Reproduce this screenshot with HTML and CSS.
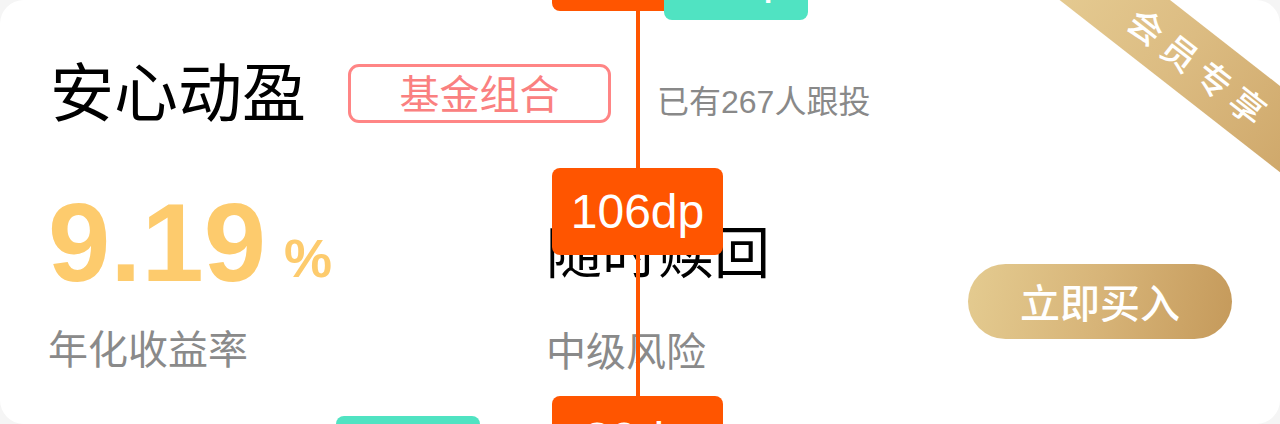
FILE: index.html
```html
<!DOCTYPE html>
<html lang="zh-CN">
<head>
<meta charset="utf-8">
<title>安心动盈</title>
<link rel="stylesheet" href="styles.css">
</head>
<body>
<div class="card">
  <div class="head">
    <h1 class="title">安心动盈</h1>
    <span class="tag">基金组合</span>
    <span class="followers">已有267人跟投</span>
  </div>
  <div class="body">
    <div class="metric metric-rate">
      <div class="rate"><span class="rate-num">9.19</span><span class="rate-unit">%</span></div>
      <div class="label label-rate">年化收益率</div>
    </div>
    <div class="metric metric-redeem">
      <div class="redeem">随时赎回</div>
      <div class="label label-redeem">中级风险</div>
    </div>
    <button class="buy">立即买入</button>
  </div>
  <div class="ribbon"><span class="ribbon-text">会员专享</span></div>
  <div class="measure">
    <div class="measure-line"></div>
    <div class="dim dim-orange dim-top">40dp</div>
    <div class="dim dim-teal dim-teal-top">32dp</div>
    <div class="dim dim-orange dim-mid">106dp</div>
    <div class="dim dim-orange dim-bottom">30dp</div>
    <div class="dim dim-teal dim-teal-bottom">32dp</div>
  </div>
</div>
</body>
</html>
```
FILE: styles.css
```css
* { box-sizing: border-box; }
html, body { margin: 0; padding: 0; }
body {
  background: #f5f5f5;
  width: 1280px;
  height: 424px;
  overflow: hidden;
  font-family: "Liberation Sans", "Noto Sans CJK SC", sans-serif;
}
.card {
  position: relative;
  width: 1280px;
  height: 424px;
  background: #fff;
  border-radius: 24px;
  overflow: hidden;
  padding: 56px 48px 0 48px;
}
.head {
  display: flex;
  align-items: flex-start;
  height: 67px;
}
.title {
  margin: 0 0 0 2px;
  font-family: "Noto Sans CJK SC", sans-serif;
  font-weight: 400;
  font-size: 64px;
  line-height: 64px;
  color: #000;
}
.tag {
  margin: 8px 0 0 42px;
  width: 263px;
  height: 59px;
  border: 3px solid #ff8585;
  border-radius: 11px;
  font-family: "Noto Sans CJK SC", sans-serif;
  font-size: 40px;
  line-height: 50px;
  padding-bottom: 3px;
  text-align: center;
  color: #fa8080;
}
.followers {
  margin: 30px 0 0 46px;
  font-size: 32px;
  line-height: 32px;
  color: #898989;
}
.body {
  display: flex;
  align-items: flex-start;
  margin-top: 61px;
}
.metric { display: flex; flex-direction: column; }
.metric-rate { width: 498px; }
.rate {
  margin: 3px 0 0 0;
  color: #fdcb6d;
  font-family: "Liberation Sans", sans-serif;
  font-weight: 700;
  line-height: 112px;
  height: 112px;
  white-space: nowrap;
}
.rate-num { font-size: 112px; }
.rate-unit { font-size: 54px; margin-left: 18px; vertical-align: 4px; }
.label {
  font-family: "Noto Sans CJK SC", sans-serif;
  font-size: 40px;
  line-height: 40px;
  color: #8a8a8a;
}
.label-rate { margin-top: 28px; }
.metric-redeem { margin-top: 37px; }
.redeem {
  font-family: "Noto Sans CJK SC", sans-serif;
  font-size: 56px;
  line-height: 56px;
  color: #000;
}
.label-redeem { margin-top: 52px; }
.buy {
  margin: 80px 0 0 auto;
  width: 264px;
  height: 75px;
  border: 0;
  border-radius: 38px;
  background: linear-gradient(100deg, #e4cb90 0%, #d7b478 50%, #c59a5b 100%);
  color: #fff;
  font-family: "Noto Sans CJK SC", sans-serif;
  font-weight: 500;
  font-size: 40px;
  line-height: 75px;
  padding: 0;
}
.ribbon {
  position: absolute;
  left: 978px;
  top: 31px;
  width: 440px;
  height: 68px;
  transform: rotate(38deg);
  background: linear-gradient(90deg, #e9d198 0%, #dcbc82 45%, #c89d5e 100%);
  display: flex;
  align-items: center;
  justify-content: center;
}
.ribbon-text {
  font-family: "Noto Sans CJK SC", sans-serif;
  font-weight: 500;
  font-size: 35px;
  line-height: 68px;
  letter-spacing: 8px;
  margin-left: 8px;
  color: #fff;
}
.measure-line {
  position: absolute;
  left: 636px;
  top: 0;
  width: 4px;
  height: 424px;
  background: #ff5500;
}
.dim {
  position: absolute;
  height: 87px;
  border-radius: 8px;
  color: #fff;
  font-family: "Liberation Sans", sans-serif;
  font-size: 48px;
  line-height: 87px;
  text-align: center;
}
.dim-orange { background: #ff5500; width: 171px; left: 552px; }
.dim-teal { background: #50e3c2; width: 144px; }
.dim-top { top: -76px; }
.dim-teal-top { left: 664px; top: -67px; }
.dim-mid { top: 168px; }
.dim-bottom { top: 396px; }
.dim-teal-bottom { left: 336px; top: 416px; }
```
